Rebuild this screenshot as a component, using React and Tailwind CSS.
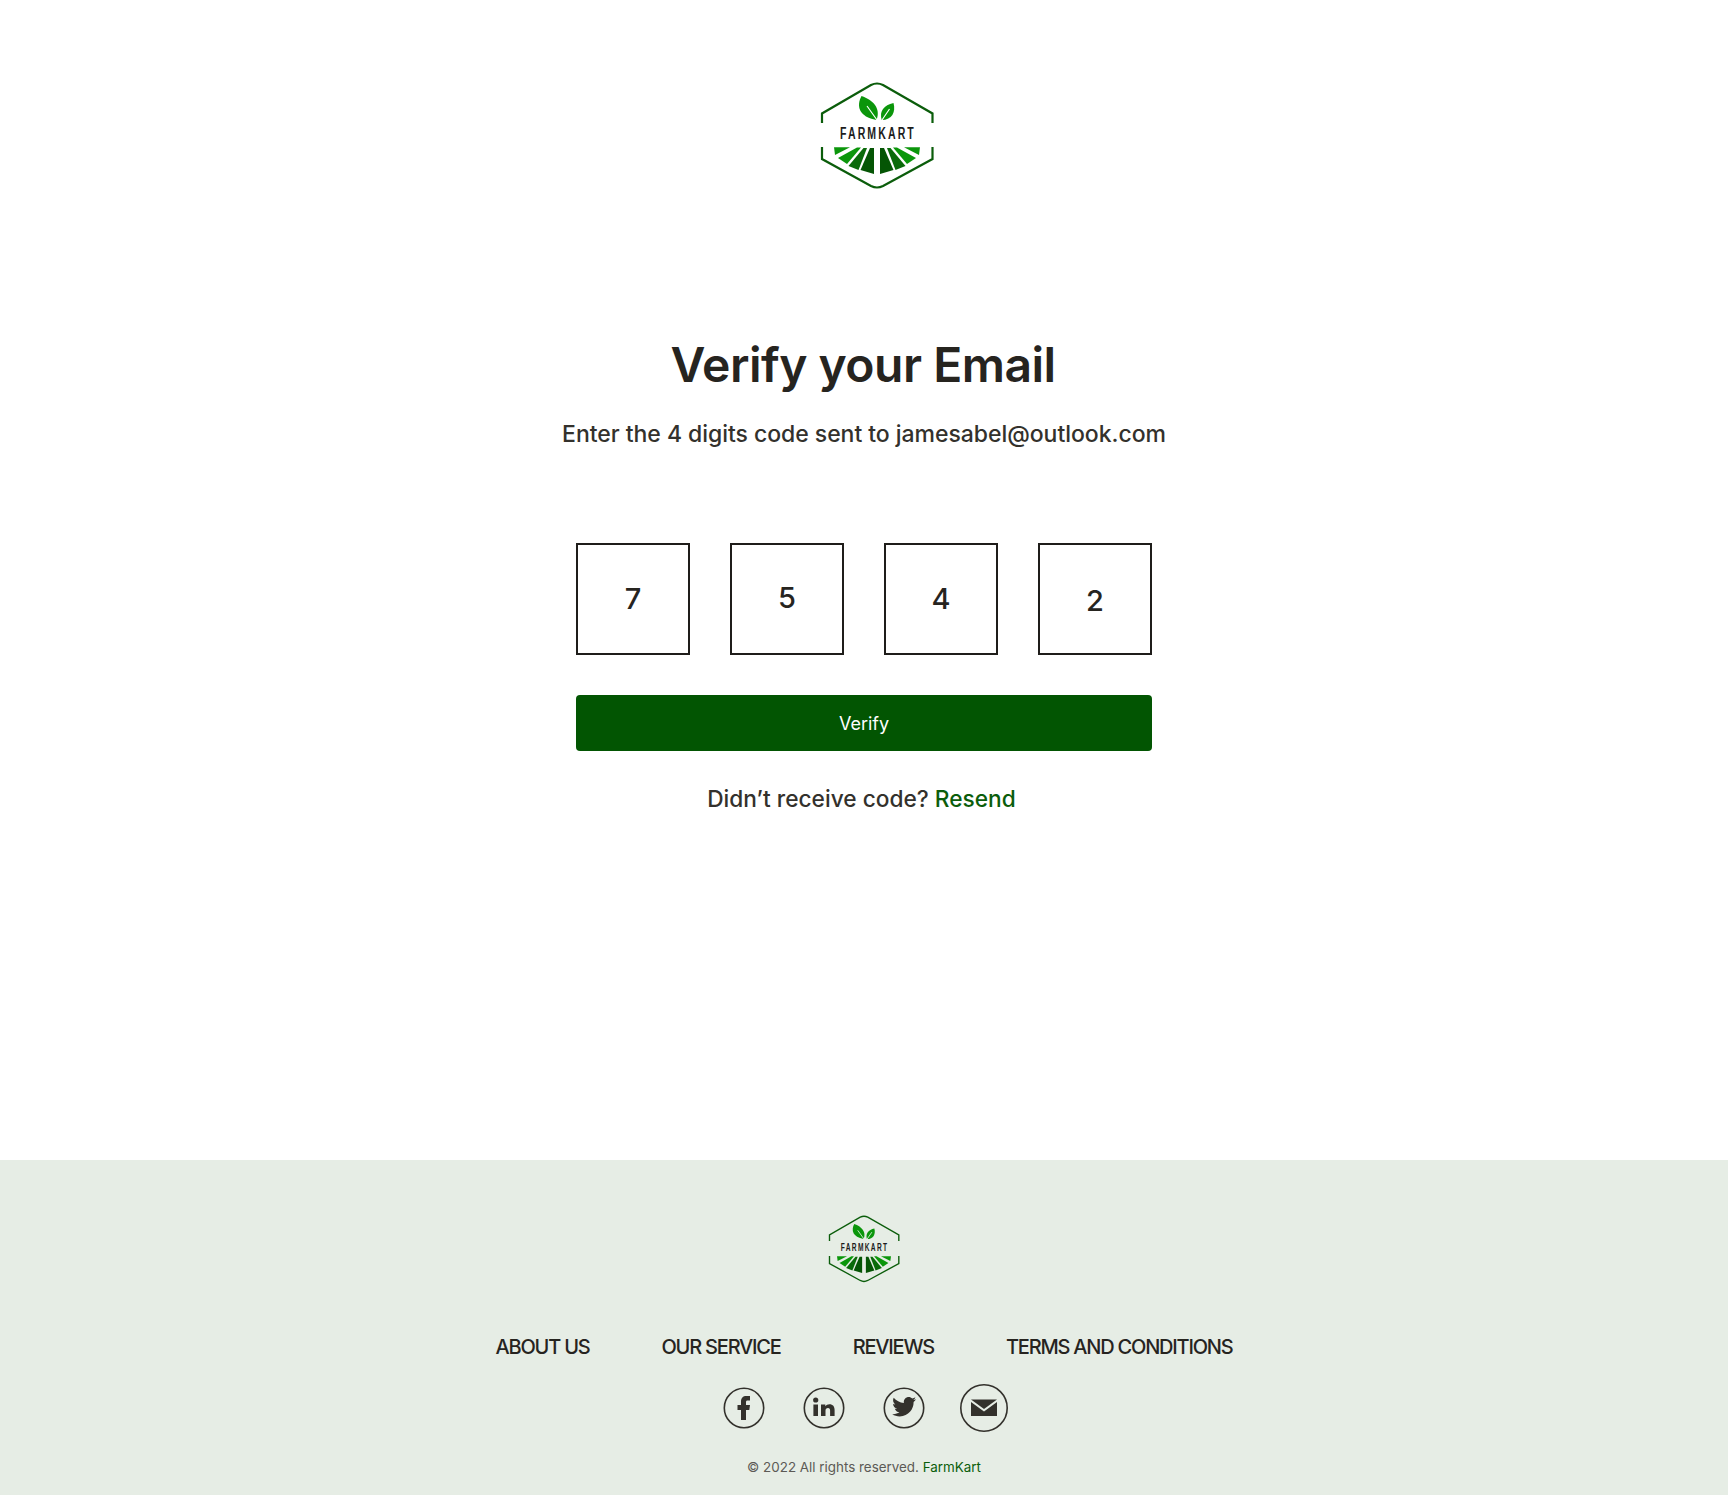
import React from "react";

function Logo({ className }) {
  return (
    <svg viewBox="20 10 114 110" className={className}>
      <path d="M22 53V43.5L71 15Q77 12 83 15L132.5 43.5V53" fill="none" stroke="#0b5d0b" strokeWidth="2.2" />
      <path d="M22 77V89L71 116Q77 119 83 116L132.5 89V77" fill="none" stroke="#0b5d0b" strokeWidth="2.2" />
      <path d="M61.5 26C56 36 59 47 76.5 50C81 38 73 30 61.5 26Z" fill="#0b960b" />
      <path d="M93.5 33C84 35 79 41 81.7 50C92 50 96 42 93.5 33Z" fill="#0b960b" />
      <path d="M67 36L77 50M89.5 39L82 50" stroke="#fff" strokeWidth="1.2" />
      <text transform="translate(40 69) scale(0.62 1)" fontSize="17" fontWeight="700" fill="#1c1c1c" textLength="119" lengthAdjust="spacing" className="font-['Liberation_Sans',sans-serif]">FARMKART</text>
      <g fill="#0b960b">
        <path d="M34 77.3H50L35 85Z" />
        <path d="M38 88L57 77.5H61L47 94Z" />
        <path d="M120 77.3H104L119 85Z" />
        <path d="M116 88L97 77.5H93L107 94Z" />
      </g>
      <g fill="#0a6a0a">
        <path d="M48.5 96L63.5 78H67L58.5 100Z" />
        <path d="M105.5 96L90.5 78H87L95.5 100Z" />
      </g>
      <g fill="#055505">
        <path d="M60.5 100L70 78H74V104Z" />
        <path d="M93.5 100L84 78H80V104Z" />
      </g>
    </svg>
  );
}

function Facebook() {
  return (
    <svg viewBox="0 0 42 42" className="w-[42px] h-[42px]">
      <circle cx="21" cy="21" r="19.7" fill="none" stroke="#33312c" strokeWidth="1.6" />
      <path d="M18 33V23H14.5V18H18V14.5C18 11 20 9 23.3 9H27V13.6H24.6C23.4 13.6 23 14.2 23 15.3V18H27L26.3 23H23V33Z" fill="#33312c" />
    </svg>
  );
}

function Linkedin() {
  return (
    <svg viewBox="0 0 42 42" className="w-[42px] h-[42px]">
      <circle cx="21" cy="21" r="19.7" fill="none" stroke="#33312c" strokeWidth="1.6" />
      <circle cx="12.7" cy="13" r="2.6" fill="#33312c" />
      <path d="M10.4 17.5H15V29H10.4ZM18 17.5H22.3V19.2C23.2 17.9 24.7 17.2 26.4 17.2C30 17.2 31.6 19.4 31.6 23V29H27.1V23.8C27.1 22 26.5 21 25 21C23.4 21 22.5 22 22.5 23.8V29H18Z" fill="#33312c" />
    </svg>
  );
}

function Twitter() {
  return (
    <svg viewBox="0 0 42 42" className="w-[42px] h-[42px]">
      <circle cx="21" cy="21" r="19.7" fill="none" stroke="#33312c" strokeWidth="1.6" />
      <path d="M33 12.3C32.1 12.7 31.2 13 30.2 13.1C31.2 12.5 32 11.5 32.4 10.3C31.4 10.9 30.4 11.3 29.3 11.5C28.4 10.5 27.1 9.9 25.7 9.9C23 9.9 20.8 12.1 20.8 14.8C20.8 15.2 20.8 15.6 20.9 15.9C16.8 15.7 13.2 13.8 10.7 10.8C10.3 11.5 10.1 12.4 10.1 13.3C10.1 15 10.9 16.5 12.3 17.4C11.5 17.4 10.8 17.2 10.1 16.8C10.1 19.2 11.8 21.2 14 21.6C13.3 21.8 12.5 21.8 11.8 21.7C12.4 23.7 14.3 25.1 16.4 25.1C14.4 26.7 11.9 27.5 9.2 27.2C11.4 28.6 14 29.4 16.7 29.4C25.7 29.4 30.6 22 30.6 15.6V15C31.6 14.3 32.4 13.4 33 12.3Z" fill="#33312c" />
    </svg>
  );
}

function Mail() {
  return (
    <svg viewBox="0 0 48 48" className="w-[48px] h-[48px]">
      <circle cx="24" cy="24" r="23.2" fill="none" stroke="#33312c" strokeWidth="1.6" />
      <path d="M11 15.5H37L24 25Z" fill="#33312c" />
      <path d="M11 18L24 27.5L37 18V32H11Z" fill="#33312c" />
    </svg>
  );
}

export default function App() {
  const font = "font-['Inter','Noto_Sans',sans-serif]";
  return (
    <div className={`${font} min-h-[1495px] flex flex-col bg-white text-[#26241f]`}>
      <header className="h-[217px] flex justify-center pt-[80px] pl-[26px]">
        <Logo className="w-[114px] h-[110px]" />
      </header>
      <main className="flex-1 flex flex-col items-center pt-[117px]">
        <h1 className="pr-[2px] text-[48px] leading-[62px] font-semibold tracking-[-0.5px]">Verify your Email</h1>
        <p className="mt-[22px] text-[23px] leading-[32px] font-medium text-[#33312c] tracking-[-0.04px]">
          Enter the 4 digits code sent to jamesabel@outlook.com
        </p>
        <div className="mt-[93px] flex gap-[40px]">
          <div className="w-[114px] h-[112px] border-2 border-[#1f1d1a] flex items-center justify-center text-[29px] font-medium">7</div>
          <div className="w-[114px] h-[112px] border-2 border-[#1f1d1a] flex items-center justify-center text-[29px] font-medium pb-[2px]">5</div>
          <div className="w-[114px] h-[112px] border-2 border-[#1f1d1a] flex items-center justify-center text-[29px] font-medium">4</div>
          <div className="w-[114px] h-[112px] border-2 border-[#1f1d1a] flex items-center justify-center text-[29px] font-medium pt-[3px]">2</div>
        </div>
        <button className="mt-[40px] w-[576px] h-[56px] rounded-[4px] bg-[#025502] text-white text-[18px] font-normal">
          Verify
        </button>
        <p className="mt-[32px] pr-[5px] text-[22.7px] leading-[32px] font-medium text-[#33312c]">
          Didn’t receive code? <span className="text-[#0b5d0b]">Resend</span>
        </p>
      </main>
      <footer className="h-[335px] bg-[#e6ede5] flex flex-col items-center pt-[54px]">
        <Logo className="w-[72px] h-[69px]" />
        <nav className="mt-[50px] flex gap-[72px] text-[20px] leading-[28px] font-medium tracking-[-1.2px] text-[#26241f]">
          <span>ABOUT US</span>
          <span>OUR SERVICE</span>
          <span>REVIEWS</span>
          <span>TERMS AND CONDITIONS</span>
        </nav>
        <div className="mt-[23px] pl-[2px] flex items-center gap-[38px]">
          <Facebook />
          <Linkedin />
          <Twitter />
          <div className="-ml-[3px]"><Mail /></div>
        </div>
        <p className="mt-[25px] text-[13.4px] leading-[20px] text-[#5c5a55]">
          © 2022 All rights reserved. <span className="text-[#0b5d0b]">FarmKart</span>
        </p>
      </footer>
    </div>
  );
}
